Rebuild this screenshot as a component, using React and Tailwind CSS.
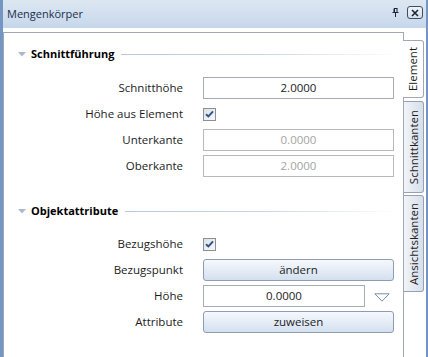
import React from "react";

const font = "font-['Segoe_UI','Open_Sans',sans-serif]";

function Check() {
  return (
    <span className="flex h-[13px] w-[13px] items-center justify-center border border-[#8e8f8f] bg-linear-to-br from-[#dde2e8] to-[#f7f8fa]">
      <svg width="9" height="8" viewBox="0 0 9 8">
        <path d="M1 4.2 L3.4 6.5 L8 1.3" fill="none" stroke="#2e5289" strokeWidth="1.9" />
      </svg>
    </span>
  );
}

function Input({ value, disabled, className = "w-[191px]" }) {
  return (
    <div
      className={`flex h-[22px] items-center justify-center border bg-white ${className} ${
        disabled ? "border-[#b7b9bd] text-[#a3a3a3]" : "border-[#a5acb5] text-[#1c1c1c]"
      }`}
    >
      {value}
    </div>
  );
}

function Button({ label }) {
  return (
    <div className="flex h-[22px] w-[191px] items-center justify-center rounded-[3px] border border-[#8e9db4] bg-linear-to-b from-[#f6f9fd] to-[#d4e0ef] text-[#1c1c1c]">
      {label}
    </div>
  );
}

function Row({ label, children }) {
  return (
    <div className="flex h-[22px] items-center">
      <div className="w-[179px] text-right text-[#1c1c1c]">{label}</div>
      <div className="ml-[20px] flex items-center">{children}</div>
    </div>
  );
}

function Header({ title }) {
  return (
    <div className="flex h-[16px] items-center">
      <svg className="ml-[14px]" width="8" height="5" viewBox="0 0 8 5">
        <path d="M0 0 L8 0 L4 4.5 Z" fill="#aab9cc" />
      </svg>
      <span className="ml-[5px] text-[11px] font-bold text-black">{title}</span>
      <div className="ml-[7px] mr-[3px] h-px flex-1 bg-linear-to-r from-[#b8c9de] via-[#c8d6e6] to-white" />
    </div>
  );
}

function Tab({ label, selected, className }) {
  return (
    <div
      className={`flex items-center justify-center rounded-r-[3px] border border-l-0 text-[#1c1c1c] ${
        selected
          ? "-ml-px w-[21px] border-[#a0a8b4] bg-white"
          : "w-[20px] border-[#96a2b3] bg-linear-to-r from-[#f1f4f8] to-[#d6dfeb]"
      } ${className}`}
    >
      <span className="rotate-180 [writing-mode:vertical-rl] leading-none">{label}</span>
    </div>
  );
}

export default function App() {
  return (
    <div className={`${font} flex h-[357px] w-[428px] flex-col border-l-[3px] border-r-[2px] border-[#7595c3] text-[11.5px]`}>
      <div className="flex h-[28px] shrink-0 items-center bg-linear-to-b from-[#dde7f3] to-[#c6d7eb] pl-[4px] pr-[3px]">
        <span className="text-[11px] text-[#1b2f4b]">Mengenkörper</span>
        <div className="flex-1" />
        <svg className="mb-[3px]" width="7" height="9" viewBox="0 0 7 9">
          <path d="M2 0.5 H5.5 M2.5 0.5 V4.5 M2 0.5 V4.5 M5 0.5 V4.5 M0.5 4.5 H6.5 M3.5 4.5 V9" fill="none" stroke="#1b2536" strokeWidth="1" />
        </svg>
        <div className="ml-[8px] mb-[3px] flex h-[13px] w-[16px] items-center justify-center rounded-[3px] border border-[#3f4d60] bg-linear-to-b from-[#eef3f9] to-[#d3deeb]">
          <svg width="8" height="8" viewBox="0 0 8 8">
            <path d="M1 1 L7 7 M7 1 L1 7" stroke="#1b2536" strokeWidth="1.6" />
          </svg>
        </div>
      </div>

      <div className="flex flex-1 bg-white pt-[4px]">
        <div className="w-[401px] border border-b-0 border-[#a0a8b4] bg-white pt-[13px]">
          <Header title="Schnittführung" />
          <div className="mt-[15px] flex flex-col gap-[4px]">
            <Row label="Schnitthöhe">
              <Input value="2.0000" />
            </Row>
            <Row label="Höhe aus Element">
              <Check />
            </Row>
            <Row label="Unterkante">
              <Input value="0.0000" disabled />
            </Row>
            <Row label="Oberkante">
              <Input value="2.0000" disabled />
            </Row>
          </div>

          <div className="mt-[26px]">
            <Header title="Objektattribute" />
          </div>
          <div className="mt-[14px] flex flex-col gap-[4px]">
            <Row label="Bezugshöhe">
              <Check />
            </Row>
            <Row label="Bezugspunkt">
              <Button label="ändern" />
            </Row>
            <Row label="Höhe">
              <Input value="0.0000" className="w-[162px]" />
              <svg className="ml-[9px] mt-[2px]" width="16" height="9" viewBox="0 0 16 9">
                <path d="M0.8 0.8 H15.2 L8 8.2 Z" fill="none" stroke="#7d8ca3" strokeWidth="1" />
              </svg>
            </Row>
            <Row label="Attribute">
              <Button label="zuweisen" />
            </Row>
          </div>
        </div>

        <div className="flex w-[22px] flex-col pt-[8px]">
          <Tab label="Element" selected className="h-[58px]" />
          <Tab label="Schnittkanten" className="mt-[3px] h-[92px]" />
          <Tab label="Ansichtskanten" className="mt-[2px] h-[97px]" />
        </div>
      </div>
    </div>
  );
}
